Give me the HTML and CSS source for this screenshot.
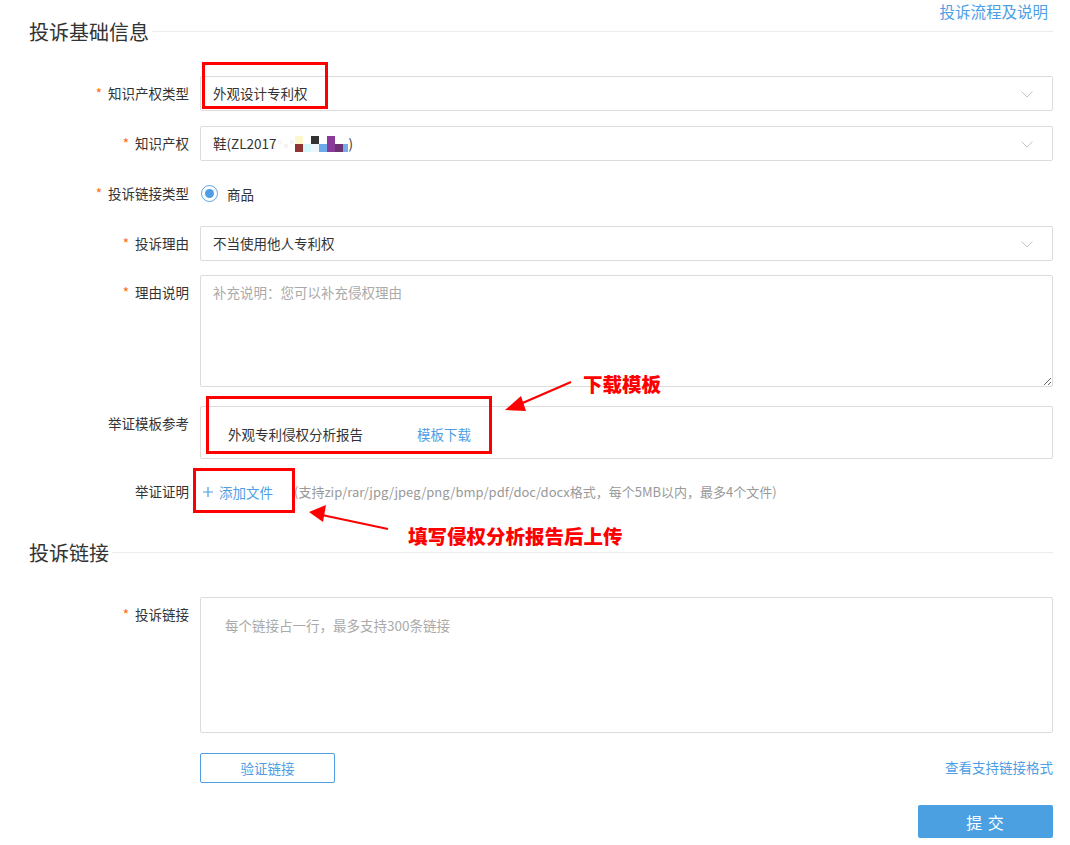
FILE: index.html
```html
<!DOCTYPE html>
<html lang="zh-CN">
<head>
<meta charset="utf-8">
<title>投诉基础信息</title>
<link rel="stylesheet" href="styles.css">
</head>
<body>
<div class="page">
  <div class="toplink"><a href="#">投诉流程及说明</a></div>

  <div class="section-title"><span>投诉基础信息</span><i class="rule"></i></div>

  <div class="form first">
    <div class="row">
      <label class="label"><span class="req">*</span>知识产权类型</label>
      <div class="field">
        <div class="select"><span>外观设计专利权</span>
          <svg class="chev" width="12" height="7" viewBox="0 0 12 7"><path d="M0.5 0.5 L6 6 L11.5 0.5" fill="none" stroke="#c4c4c4" stroke-width="1"/></svg>
        </div>
      </div>
    </div>

    <div class="row">
      <label class="label"><span class="req">*</span>知识产权</label>
      <div class="field">
        <div class="select"><span>鞋(ZL2017<svg class="mosaic" width="72" height="16" viewBox="0 0 72 16">
            <rect x="1" y="4" width="4" height="4" fill="#f6f6f6"/>
            <rect x="7" y="8" width="4" height="4" fill="#f3f3f3"/>
            <rect x="13" y="4" width="4" height="4" fill="#f5f5f5"/>
            <rect x="18" y="0" width="8" height="8" fill="#fdf7cf"/>
            <rect x="18" y="8" width="8" height="8" fill="#8e3434"/>
            <rect x="26" y="8" width="8" height="8" fill="#d3f7fa"/>
            <rect x="34" y="0" width="8" height="8" fill="#333333"/>
            <rect x="34" y="8" width="8" height="8" fill="#eef6fb"/>
            <rect x="42" y="8" width="8" height="8" fill="#6eaaea"/>
            <rect x="50" y="0" width="8" height="16" fill="#8a3a98"/>
            <rect x="58" y="8" width="8" height="8" fill="#6e3274"/>
            <rect x="66" y="8" width="5" height="8" fill="#75aee8"/>
          </svg>)</span>
          <svg class="chev" width="12" height="7" viewBox="0 0 12 7"><path d="M0.5 0.5 L6 6 L11.5 0.5" fill="none" stroke="#c4c4c4" stroke-width="1"/></svg>
        </div>
      </div>
    </div>

    <div class="row">
      <label class="label"><span class="req">*</span>投诉链接类型</label>
      <div class="field radio-field">
        <span class="radio"><i></i></span><span class="radio-text">商品</span>
      </div>
    </div>

    <div class="row">
      <label class="label"><span class="req">*</span>投诉理由</label>
      <div class="field">
        <div class="select"><span>不当使用他人专利权</span>
          <svg class="chev" width="12" height="7" viewBox="0 0 12 7"><path d="M0.5 0.5 L6 6 L11.5 0.5" fill="none" stroke="#c4c4c4" stroke-width="1"/></svg>
        </div>
      </div>
    </div>

    <div class="row row-reason">
      <label class="label"><span class="req">*</span>理由说明</label>
      <div class="field">
        <textarea class="ta ta-reason" placeholder="补充说明：您可以补充侵权理由"></textarea>
      </div>
    </div>

    <div class="row row-template">
      <label class="label">举证模板参考</label>
      <div class="field">
        <div class="template-box">
          <span class="tpl-name">外观专利侵权分析报告</span>
          <a class="tpl-link" href="#">模板下载</a>
        </div>
      </div>
    </div>

    <div class="row row-proof">
      <label class="label">举证证明</label>
      <div class="field proof-field">
        <a class="add-file" href="#"><svg width="10" height="10" viewBox="0 0 10 10"><path d="M5 0 V10 M0 5 H10" stroke="#4d9ee5" stroke-width="1.2"/></svg><span>添加文件</span></a>
        <span class="hint">(支持zip/rar/jpg/jpeg/png/bmp/pdf/doc/docx格式，每个5MB以内，最多4个文件)</span>
      </div>
    </div>
  </div>

  <div class="section-title second"><span>投诉链接</span><i class="rule"></i></div>

  <div class="form second-form">
    <div class="row">
      <label class="label"><span class="req">*</span>投诉链接</label>
      <div class="field">
        <textarea class="ta ta-links" placeholder="每个链接占一行，最多支持300条链接"></textarea>
      </div>
    </div>
    <div class="row row-actions">
      <div class="label"></div>
      <div class="field actions">
        <button class="btn-outline" type="button">验证链接</button>
        <a class="link-small" href="#">查看支持链接格式</a>
      </div>
    </div>
  </div>

  <div class="submit-row"><button class="btn-primary" type="button">提 交</button></div>

  <!-- annotations -->
  <div class="mark mark-1"></div>
  <div class="mark mark-2"></div>
  <div class="mark mark-3"></div>
  <svg class="arrows" width="1070" height="845" viewBox="0 0 1070 845">
    <line x1="571" y1="382" x2="518" y2="405" stroke="#f00" stroke-width="2.2"/>
    <polygon points="505,410 521,396 526,411" fill="#f00"/>
    <line x1="388" y1="529" x2="322" y2="515" stroke="#f00" stroke-width="2.2"/>
    <polygon points="309,512 326,505 323,522" fill="#f00"/>
  </svg>
  <div class="note note-1">下载模板</div>
  <div class="note note-2">填写侵权分析报告后上传</div>
</div>
</body>
</html>
```
FILE: styles.css
```css
* { box-sizing: border-box; }
html, body { margin: 0; padding: 0; background: #fff; }
body {
  font-family: "Noto Sans CJK SC", "Noto Sans", sans-serif;
  color: #333;
  font-size: 13.5px;
}
a { text-decoration: none; color: #4d9ee5; }

.page {
  position: relative;
  width: 1070px;
  height: 845px;
  padding: 0 17px 0 29px;
}

.toplink {
  height: 22px;
  line-height: 22px;
  text-align: right;
  font-size: 15.5px;
  padding-right: 5px;
}

.section-title {
  display: flex;
  align-items: center;
  height: 20px;
  font-size: 20px;
  line-height: 20px;
  color: #333;
}
.section-title .rule {
  flex: 1;
  height: 1px;
  background: #ececec;
  margin-left: 3px;
  margin-top: -1px;
}
.section-title.second { margin-top: 34px; }

.form.first { margin-top: 34px; }
.form.second-form { margin-top: 34px; }

.row {
  display: flex;
  margin-bottom: 15px;
}
.label {
  width: 171px;
  flex: none;
  padding-right: 11px;
  text-align: right;
  line-height: 35px;
  white-space: nowrap;
}
.req { color: #ff6a00; margin-right: 6px; }
.field { flex: 1; min-width: 0; }

.select {
  position: relative;
  height: 35px;
  border: 1px solid #dcdcdc;
  border-radius: 2px;
  padding-left: 12px;
  line-height: 33px;
  display: flex;
  align-items: center;
}
.select .chev {
  position: absolute;
  right: 19px;
  top: 14px;
}
.mosaic { vertical-align: middle; margin-top: -2px; }

.radio-field {
  display: flex;
  align-items: center;
  height: 35px;
}
.radio {
  width: 17px;
  height: 17px;
  border: 1px solid #5aa5e8;
  border-radius: 50%;
  display: flex;
  align-items: center;
  justify-content: center;
  margin-left: 1px;
}
.radio i {
  width: 9px;
  height: 9px;
  border-radius: 50%;
  background: #4d9ee5;
}
.radio-text { margin-left: 9px; }

.row-reason { margin-top: -1px; margin-bottom: 19px; }

.ta {
  display: block;
  width: 100%;
  border: 1px solid #dcdcdc;
  border-radius: 2px;
  font-family: "Noto Sans CJK SC", "Noto Sans", sans-serif;
  font-size: 13.5px;
  line-height: 20px;
  color: #333;
  outline: none;
}
.ta::placeholder { color: #aaa; }
.ta-reason {
  height: 112px;
  padding: 6px 12px;
  resize: vertical;
}
.ta-links {
  height: 136px;
  padding: 17px 24px;
  resize: none;
}

.template-box {
  height: 53px;
  border: 1px solid #dcdcdc;
  border-radius: 2px;
  padding: 17px 27px 0;
  line-height: 20px;
  display: flex;
}
.tpl-link { margin-left: 54px; }

.row-proof { margin-bottom: 0; }
.proof-field {
  display: flex;
  align-items: center;
  height: 35px;
}
.add-file {
  display: flex;
  align-items: center;
  margin-left: 3px;
}
.add-file svg { margin-right: 6px; }
.hint {
  margin-left: 21px;
  color: #999;
  font-size: 13px;
}

.row-actions { margin-top: 20px; margin-bottom: 0; }
.actions {
  display: flex;
  align-items: center;
  justify-content: space-between;
}
.btn-outline {
  width: 135px;
  height: 30px;
  border: 1px solid #4d9ee5;
  border-radius: 2px;
  background: #fff;
  color: #4d9ee5;
  font-family: "Noto Sans CJK SC", "Noto Sans", sans-serif;
  font-size: 13.5px;
  padding: 0;
  cursor: pointer;
}
.link-small { margin-top: -2px; }

.submit-row {
  display: flex;
  justify-content: flex-end;
  margin-top: 22px;
}
.btn-primary {
  width: 135px;
  height: 33px;
  border: none;
  border-radius: 2px;
  background: #4ba0e2;
  color: #fff;
  font-family: "Noto Sans CJK SC", "Noto Sans", sans-serif;
  font-size: 16px;
  letter-spacing: 1px;
  padding: 0;
}

/* annotation overlays */
.mark {
  position: absolute;
  border: 3px solid #f00;
  pointer-events: none;
}
.mark-1 { left: 202px; top: 62px; width: 126px; height: 47px; }
.mark-2 { left: 206px; top: 396px; width: 286px; height: 58px; }
.mark-3 { left: 193px; top: 468px; width: 102px; height: 45px; }
.arrows {
  position: absolute;
  left: 0;
  top: 0;
  pointer-events: none;
}
.note {
  position: absolute;
  color: #f00;
  font-weight: 900;
  font-size: 19.5px;
  line-height: 24px;
  white-space: nowrap;
}
.note-1 { left: 583px; top: 372px; }
.note-2 { left: 408px; top: 524px; }
```
